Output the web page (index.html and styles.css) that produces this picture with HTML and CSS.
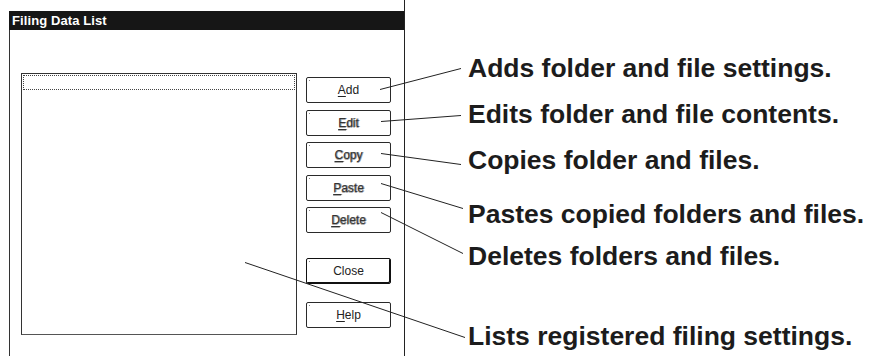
FILE: index.html
```html
<!DOCTYPE html>
<html>
<head>
<meta charset="utf-8">
<link rel="stylesheet" href="styles.css">
</head>
<body>
<div class="canvas">
  <div class="window">
    <div class="titlebar">Filing Data List</div>
    <div class="client">
      <div class="listbox"><div class="focusrow"></div></div>
      <div class="buttons">
        <div class="btn"><u>A</u>dd</div>
        <div class="btn dim"><u>E</u>dit</div>
        <div class="btn dim"><u>C</u>opy</div>
        <div class="btn dim"><u>P</u>aste</div>
        <div class="btn dim"><u>D</u>elete</div>
        <div class="btn default close">Close</div>
        <div class="btn help"><u>H</u>elp</div>
      </div>
    </div>
  </div>
  <div class="labels">
    <div class="label l-add">Adds folder and file settings.</div>
    <div class="label l-edit">Edits folder and file contents.</div>
    <div class="label l-copy">Copies folder and files.</div>
    <div class="label l-paste">Pastes copied folders and files.</div>
    <div class="label l-delete">Deletes folders and files.</div>
    <div class="label l-list">Lists registered filing settings.</div>
  </div>
  <svg class="leaders" width="869" height="356" viewBox="0 0 869 356">
    <g stroke="#222" stroke-width="1" fill="none">
      <line x1="380" y1="89.5" x2="461" y2="68.5"/>
      <line x1="381" y1="121.5" x2="461" y2="115.5"/>
      <line x1="381" y1="153.5" x2="461" y2="164.5"/>
      <line x1="381" y1="183.5" x2="463" y2="208.5"/>
      <line x1="381" y1="212.5" x2="463" y2="253.5"/>
      <line x1="245" y1="262.5" x2="465" y2="337.5"/>
    </g>
  </svg>
</div>
</body>
</html>
```

FILE: styles.css
```css
* { box-sizing: border-box; }
html, body { margin: 0; padding: 0; background: #fff; }
.canvas {
  position: relative;
  width: 869px;
  height: 356px;
  overflow: hidden;
  display: flex;
  align-items: flex-start;
  font-family: "Liberation Sans", Arial, sans-serif;
  color: #1a1a1a;
}
.window {
  margin-left: 9px;
  width: 396px;
  height: 356px;
  padding-top: 11px;
  border-right: 1px solid #222;
  display: flex;
  flex-direction: column;
}
.titlebar {
  height: 19px;
  background: #161616;
  color: #fff;
  font-weight: bold;
  font-size: 13px;
  line-height: 19px;
  padding-left: 3px;
  letter-spacing: 0.1px;
}
.client {
  flex: 1;
  border-left: 1px solid #333;
  padding: 43px 0 0 11px;
  display: flex;
  align-items: flex-start;
}
.listbox {
  width: 276px;
  height: 262px;
  border: 1px solid #333;
  border-bottom-color: #555;
  padding: 1px;
}
.focusrow {
  height: 15px;
  border: 1px dotted #444;
}
.buttons {
  margin-left: 9px;
  margin-top: 4px;
  display: flex;
  flex-direction: column;
  gap: 6.5px;
  width: 85px;
}
.btn {
  position: relative;
  height: 26px;
  border: 1px solid #2a2a2a;
  border-radius: 2px;
  font-size: 12px;
  line-height: 24px;
  text-align: center;
  color: #222;
}
.btn::before {
  content: "";
  position: absolute;
  left: 2px;
  top: 2px;
  width: 1px;
  height: 1px;
  background: #888;
}
.btn u { text-decoration-thickness: 1px; text-underline-offset: 2px; }
.btn.dim {
  color: #333;
  text-shadow: 1px 0 0 #999, 0 1px 0 #aaa;
}
.btn.close {
  margin-top: 18px;
  border-color: #111;
  box-shadow: inset -1px -1px 0 #111;
}
.btn.help {
  margin-top: 12px;
}
.labels {
  margin-left: 63px;
  display: flex;
  flex-direction: column;
}
.label {
  font-weight: bold;
  font-size: 26.5px;
  line-height: 30px;
  white-space: nowrap;
  color: #1c1c1c;
}
.l-add { margin-top: 53px; }
.l-edit { margin-top: 16px; }
.l-copy { margin-top: 16px; }
.l-paste { margin-top: 24px; }
.l-delete { margin-top: 12px; }
.l-list { margin-top: 50px; }
.leaders {
  position: absolute;
  left: 0;
  top: 0;
  pointer-events: none;
}
```
